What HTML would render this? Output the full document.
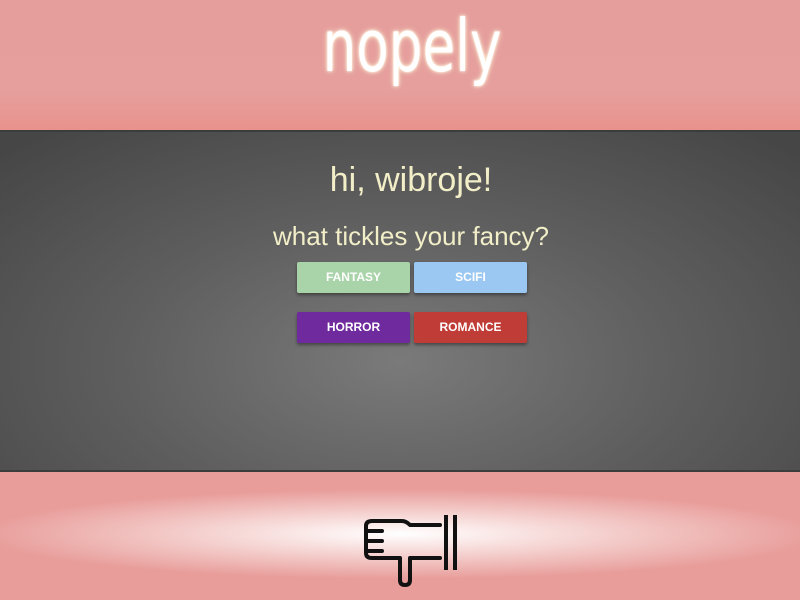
<!DOCTYPE html>
<html><head><style>
html,body{margin:0;padding:0;width:800px;height:600px;overflow:hidden;font-family:"Liberation Sans",sans-serif}
#top{position:absolute;left:0;top:0;width:800px;height:130px;background:linear-gradient(#e59e9c 0%,#e69f9d 70%,#e8928c 100%)}
#logo{position:absolute;left:12px;width:800px;top:4px;text-align:center;font-size:72px;color:#fff;font-family:"DejaVu Sans Condensed","Liberation Sans Narrow",sans-serif;text-shadow:0 0 6px #fff3d0,0 0 3px #fff;transform:scaleX(0.82)}
#mid{position:absolute;left:0;top:130px;width:800px;height:342px;border-top:2px solid #3a3d3c;border-bottom:2px solid #3a3d3c;box-sizing:border-box;background:radial-gradient(ellipse 560px 300px at 400px 230px,#7a7a7a 0%,#5e5e5e 50%,#464646 100%)}
h1{position:absolute;left:11px;width:800px;text-align:center;margin:0;font-weight:normal;color:#f1eec8}
.b{position:absolute;width:113px;height:31px;color:#fff;font-size:12px;font-weight:bold;text-align:center;line-height:31px;border-radius:2px;box-shadow:0 2px 3px rgba(0,0,0,.4)}
#bot{position:absolute;left:0;top:472px;width:800px;height:128px;background:radial-gradient(ellipse 420px 45px at 400px 62px,#fff 0%,#f6d8d6 40%,#e89d9a 100%)}
</style></head><body>
<div id="top"><div id="logo">nopely</div></div>
<div id="mid">
<h1 style="top:29px;font-size:34px">hi, wibroje!</h1>
<h1 style="top:89px;font-size:26px">what tickles your fancy?</h1>
<div class="b" style="left:297px;top:130px;background:#a9d3a9">FANTASY</div>
<div class="b" style="left:414px;top:130px;background:#9bc8f2">SCIFI</div>
<div class="b" style="left:297px;top:180px;background:#6f2a9d">HORROR</div>
<div class="b" style="left:414px;top:180px;background:#c03c36">ROMANCE</div>
</div>
<div id="bot">
<svg width="800" height="128" style="position:absolute;left:0;top:0" viewBox="0 472 800 128">
<g fill="none" stroke="#111" stroke-width="4" stroke-linecap="round" stroke-linejoin="round">
<path d="M440 525 H410 Q406 521 402 521 H372 Q366 521 366 526 V553 Q366 558 372 558 H400 V580 Q400 585 405 585 Q410 585 410 580 V558 H440"/>
<path d="M368 531 H382 M368 541 H382 M368 551 H382"/>
<path d="M446 515 V570 M455 515 V570" stroke-linecap="butt"/>
</g></svg>
</div>
</body></html>
